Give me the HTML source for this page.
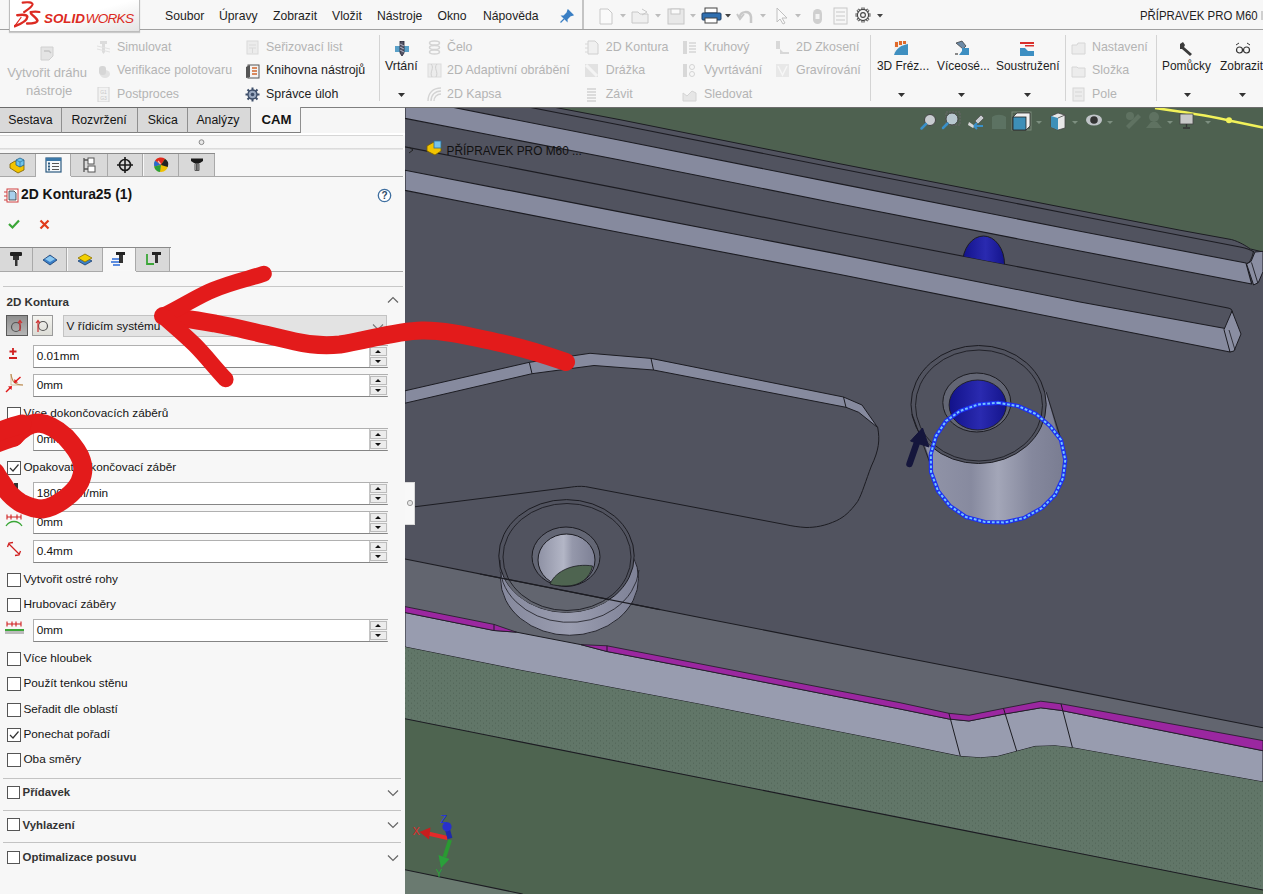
<!DOCTYPE html>
<html><head><meta charset="utf-8">
<style>
*{margin:0;padding:0;box-sizing:border-box}
html,body{width:1263px;height:894px;overflow:hidden;background:#f7f7f7;font-family:"Liberation Sans",sans-serif;color:#222}
.abs{position:absolute}
#menubar{position:absolute;left:0;top:0;width:1263px;height:30px;background:#f3f3f3;border-bottom:1px solid #a9a9a9}
#toolbar{position:absolute;left:0;top:30px;width:1263px;height:78px;background:#f7f7f7;border-bottom:2px solid #7b7b7b}
#panel{position:absolute;left:0;top:108px;width:405px;height:786px;background:#f5f5f5}
#vp{position:absolute;left:0;top:0}
.t{position:absolute;white-space:nowrap;font-size:12px;line-height:14px}
</style></head><body>
<div class="abs" style="left:0px;top:0px;width:1263px;height:29px;background:#f7f7f7"></div>
<div class="abs" style="left:0px;top:29px;width:1263px;height:1px;background:#a0a0a0"></div>
<div class="t" style="left:165px;top:10.1px;font-size:12.2px;line-height:12.2px;color:#1e1e1e;font-weight:400;">Soubor</div>
<div class="t" style="left:219px;top:10.1px;font-size:12.2px;line-height:12.2px;color:#1e1e1e;font-weight:400;">Úpravy</div>
<div class="t" style="left:273px;top:10.1px;font-size:12.2px;line-height:12.2px;color:#1e1e1e;font-weight:400;">Zobrazit</div>
<div class="t" style="left:332px;top:10.1px;font-size:12.2px;line-height:12.2px;color:#1e1e1e;font-weight:400;">Vložit</div>
<div class="t" style="left:377px;top:10.1px;font-size:12.2px;line-height:12.2px;color:#1e1e1e;font-weight:400;">Nástroje</div>
<div class="t" style="left:437.5px;top:10.1px;font-size:12.2px;line-height:12.2px;color:#1e1e1e;font-weight:400;">Okno</div>
<div class="t" style="left:483px;top:10.1px;font-size:12.2px;line-height:12.2px;color:#1e1e1e;font-weight:400;">Nápověda</div>
<svg class="abs" style="left:559px;top:8px" width="16" height="16" viewBox="0 0 16 16"><path d="M9,2 L14,7 L11,8 L8,11 L8,13 L3,8 L5,8 L8,5 Z M5,11 L1.5,14.5" fill="#3a7fc4" stroke="#3a7fc4" stroke-width="1.2"/></svg>
<div class="abs" style="left:582px;top:0px;width:2px;height:29px;background:#c4c4c4"></div>
<svg class="abs" style="left:598px;top:8px" width="16" height="17" viewBox="0 0 16 17"><path d="M2,1 H10 L14,5 V16 H2 Z" fill="#fafafa" stroke="#c8c8c8"/></svg>
<svg class="abs" style="left:631px;top:8px" width="22" height="17" viewBox="0 0 22 17"><path d="M1,4 H7 L9,6 H17 V15 H1 Z" fill="#efefef" stroke="#c8c8c8"/><path d="M11,1 L16,4 L11,7" fill="none" stroke="#c8c8c8"/></svg>
<svg class="abs" style="left:667px;top:8px" width="18" height="17" viewBox="0 0 18 17"><rect x="1" y="1" width="16" height="15" fill="#e8e8e8" stroke="#c6c6c6"/><rect x="4" y="1" width="9" height="5" fill="#fafafa" stroke="#c6c6c6"/></svg>
<svg class="abs" style="left:701px;top:7px" width="21" height="18" viewBox="0 0 21 18"><rect x="4" y="1" width="12" height="5" fill="#fff" stroke="#444"/><rect x="1" y="6" width="19" height="7" rx="1" fill="#2f6fb0" stroke="#1d3f66"/><rect x="4" y="11" width="12" height="5" fill="#fff" stroke="#444"/></svg>
<svg class="abs" style="left:736px;top:8px" width="18" height="17" viewBox="0 0 18 17"><path d="M4,9 C4,3 14,2 15,9 L15,15" fill="none" stroke="#c8c8c8" stroke-width="2.5"/><path d="M1,6 L4,11 L8,6" fill="none" stroke="#c8c8c8" stroke-width="2"/></svg>
<svg class="abs" style="left:775px;top:7px" width="14" height="18" viewBox="0 0 14 18"><path d="M2,1 L2,15 L5,12 L8,17 L10,16 L7,11 L12,11 Z" fill="#fafafa" stroke="#c0c0c0"/></svg>
<svg class="abs" style="left:812px;top:8px" width="11" height="17" viewBox="0 0 11 17"><rect x="1" y="1" width="9" height="15" rx="4.5" fill="#cfcfcf"/><rect x="3.5" y="6" width="4" height="5" fill="#f3f3f3"/></svg>
<svg class="abs" style="left:833px;top:7px" width="15" height="18" viewBox="0 0 15 18"><rect x="1" y="1" width="13" height="16" fill="#f6f6f6" stroke="#c8c8c8"/><path d="M3,5 H12 M3,9 H12 M3,13 H12" stroke="#c8c8c8"/></svg>
<svg class="abs" style="left:854px;top:6px" width="18" height="18" viewBox="0 0 18 18"><path d="M14.20,9.00 L16.60,9.00 M12.68,12.68 L14.37,14.37 M9.00,14.20 L9.00,16.60 M5.32,12.68 L3.63,14.37 M3.80,9.00 L1.40,9.00 M5.32,5.32 L3.63,3.63 M9.00,3.80 L9.00,1.40 M12.68,5.32 L14.37,3.63" stroke="#444" stroke-width="3.2"/><path d="M14.20,9.00 L16.60,9.00 M12.68,12.68 L14.37,14.37 M9.00,14.20 L9.00,16.60 M5.32,12.68 L3.63,14.37 M3.80,9.00 L1.40,9.00 M5.32,5.32 L3.63,3.63 M9.00,3.80 L9.00,1.40 M12.68,5.32 L14.37,3.63" stroke="#f4f4f4" stroke-width="1.2"/><circle cx="9" cy="9" r="5.6" fill="#f4f4f4" stroke="#444" stroke-width="1.1"/><circle cx="9" cy="9" r="2.4" fill="none" stroke="#444" stroke-width="1.1"/></svg>
<svg class="abs" style="left:620px;top:14px" width="6" height="4" viewBox="0 0 6 4"><path d="M0,0 H6 L3,3.5 Z" fill="#bdbdbd"/></svg>
<svg class="abs" style="left:655px;top:14px" width="6" height="4" viewBox="0 0 6 4"><path d="M0,0 H6 L3,3.5 Z" fill="#bdbdbd"/></svg>
<svg class="abs" style="left:689.5px;top:14px" width="6" height="4" viewBox="0 0 6 4"><path d="M0,0 H6 L3,3.5 Z" fill="#bdbdbd"/></svg>
<svg class="abs" style="left:725px;top:14px" width="6" height="4" viewBox="0 0 6 4"><path d="M0,0 H6 L3,3.5 Z" fill="#444"/></svg>
<svg class="abs" style="left:760px;top:14px" width="6" height="4" viewBox="0 0 6 4"><path d="M0,0 H6 L3,3.5 Z" fill="#bdbdbd"/></svg>
<svg class="abs" style="left:795px;top:14px" width="6" height="4" viewBox="0 0 6 4"><path d="M0,0 H6 L3,3.5 Z" fill="#bdbdbd"/></svg>
<svg class="abs" style="left:877px;top:14px" width="6" height="4" viewBox="0 0 6 4"><path d="M0,0 H6 L3,3.5 Z" fill="#444"/></svg>
<div class="t" style="left:1140px;top:8.7px;font-size:13.2px;line-height:13.2px;color:#1e1e1e;font-weight:400;transform:scaleX(0.865);transform-origin:0 0">PŘÍPRAVEK PRO M60</div>
<div class="abs" style="left:1261px;top:11px;width:2px;height:9px;background:#d0d0d0"></div>
<div class="abs" style="left:0px;top:30px;width:1263px;height:77px;background:#f7f7f7"></div>
<div class="abs" style="left:0px;top:107px;width:251px;height:1px;background:#6c6c6c"></div>
<div class="abs" style="left:301px;top:107px;width:962px;height:1px;background:#6c6c6c"></div>
<div class="abs" style="left:9px;top:-1px;width:131px;height:33px;background:linear-gradient(165deg,#ffffff 50%,#e4e4e4);border:1px solid #bdbdbd;box-shadow:0 1px 1px rgba(0,0,0,0.18)"></div>
<svg class="abs" style="left:14px;top:1px" width="30" height="28" viewBox="0 0 30 28"><g fill="none" stroke="#dc2a22" stroke-linecap="round"><path d="M8.7,1.6 C13,1 19,1 18.5,3.5 C17.5,6.5 13,9 10.2,11" stroke-width="2.2"/><path d="M3.3,14.2 C8,13.6 13.5,13.4 13.3,16 C13,19.5 7,23 0.5,25.3" stroke-width="2.5"/><path d="M0.5,25.3 L7,16.5" stroke-width="1.2"/><path d="M16.6,11 C20,10.6 23,10.6 25.4,11" stroke-width="2.2"/><path d="M17,12.5 C19,15 23,17.5 23.5,19.6 C23.5,22.2 18,22.6 13.1,22.6" stroke-width="2.5"/></g></svg>
<div class="t" style="left:44px;top:11.8px;font-size:13.4px;line-height:13.4px;color:#dc2a22;font-weight:700;font-style:italic">SOLID</div>
<div class="t" style="left:85.5px;top:11.7px;font-size:13.6px;line-height:13.6px;color:#dc2a22;font-weight:400;font-style:italic;letter-spacing:-0.7px">WORKS</div>
<div class="abs" style="left:379px;top:35px;width:1px;height:66px;background:#d4d4d4"></div>
<div class="abs" style="left:870px;top:35px;width:1px;height:66px;background:#d4d4d4"></div>
<div class="abs" style="left:1065px;top:35px;width:1px;height:66px;background:#d4d4d4"></div>
<div class="abs" style="left:1156px;top:35px;width:1px;height:66px;background:#d4d4d4"></div>
<svg class="abs" style="left:40px;top:46px" width="14" height="15" viewBox="0 0 14 15"><path d="M1,1 H13 V10 L9,14 H1 Z" fill="#e4e4e4" stroke="#d0d0d0"/><path d="M4,5 H9 L11,7" fill="none" stroke="#c4c4c4" stroke-width="1.3"/></svg>
<div class="t" style="left:7.3px;top:66.0px;font-size:13px;line-height:13px;color:#b4b4b4;font-weight:400;">Vytvořit dráhu</div>
<div class="t" style="left:26px;top:84.0px;font-size:13px;line-height:13px;color:#b4b4b4;font-weight:400;">nástroje</div>
<svg class="abs" style="left:96px;top:40.4px" width="15" height="15" viewBox="0 0 15 15"><path d="M4,1 H11 V4 H9 V12 L7.5,14 L6,12 V4 H4 Z" fill="#dcdcdc"/><path d="M1,6 L14,9 M1,9 L14,12" stroke="#e2e2e2"/></svg>
<div class="t" style="left:117px;top:41.2px;font-size:12.4px;line-height:12.4px;color:#b4b4b4;font-weight:400;">Simulovat</div>
<svg class="abs" style="left:96px;top:63.5px" width="15" height="15" viewBox="0 0 15 15"><ellipse cx="9" cy="10" rx="5" ry="4" fill="#e2e2e2"/><rect x="3" y="2" width="7" height="9" rx="3" fill="#d6d6d6"/></svg>
<div class="t" style="left:117px;top:64.3px;font-size:12.4px;line-height:12.4px;color:#b4b4b4;font-weight:400;">Verifikace polotovaru</div>
<svg class="abs" style="left:96px;top:86.8px" width="15" height="15" viewBox="0 0 15 15"><rect x="2" y="0" width="11" height="15" fill="#f2f2f2" stroke="#d4d4d4"/><text x="7.5" y="7" font-size="5" text-anchor="middle" fill="#c8c8c8" font-family="Liberation Sans">G1</text><text x="7.5" y="13" font-size="5" text-anchor="middle" fill="#c8c8c8" font-family="Liberation Sans">G3</text></svg>
<div class="t" style="left:117px;top:87.6px;font-size:12.4px;line-height:12.4px;color:#b4b4b4;font-weight:400;">Postproces</div>
<svg class="abs" style="left:245px;top:40.4px" width="15" height="15" viewBox="0 0 15 15"><rect x="2" y="1" width="11" height="13" fill="#ececec" stroke="#dadada"/><path d="M4,5 H11 M4,8 H11 M7.5,8 V13" stroke="#dadada"/></svg>
<div class="t" style="left:266px;top:41.2px;font-size:12.4px;line-height:12.4px;color:#b4b4b4;font-weight:400;">Seřizovací list</div>
<svg class="abs" style="left:245px;top:63.5px" width="15" height="15" viewBox="0 0 15 15"><rect x="3" y="1" width="11" height="13" fill="#f4f4f4" stroke="#555"/><path d="M1,3 L5,1 L5,13 L1,14 Z" fill="#555"/><path d="M7,4 H12 M7,7 H12 M7,10 H12" stroke="#d0652b" stroke-width="1.4"/></svg>
<div class="t" style="left:266px;top:64.3px;font-size:12.4px;line-height:12.4px;color:#1e1e1e;font-weight:400;">Knihovna nástrojů</div>
<svg class="abs" style="left:245px;top:86.8px" width="15" height="15" viewBox="0 0 15 15"><circle cx="7.5" cy="7.5" r="4.5" fill="#9aa9c0" stroke="#3e4f6a" stroke-width="1.4"/><circle cx="7.5" cy="7.5" r="1.8" fill="#3e4f6a"/><path d="M7.5,0.5 V3 M7.5,12 V14.5 M0.5,7.5 H3 M12,7.5 H14.5 M2.5,2.5 L4.3,4.3 M10.7,10.7 L12.5,12.5 M2.5,12.5 L4.3,10.7 M10.7,4.3 L12.5,2.5" stroke="#3e4f6a" stroke-width="2"/></svg>
<div class="t" style="left:266px;top:87.6px;font-size:12.4px;line-height:12.4px;color:#1e1e1e;font-weight:400;">Správce úloh</div>
<svg class="abs" style="left:394px;top:41px" width="16" height="15" viewBox="0 0 16 15"><rect x="1" y="5" width="14" height="6" fill="#5aa0c8"/><path d="M6,0 H10 V12 L8,15 L6,12 Z" fill="#556" stroke="#223" stroke-width="0.8"/><path d="M6,3 L10,5 M6,6 L10,8 M6,9 L10,11" stroke="#ccd" stroke-width="0.8"/></svg>
<div class="t" style="left:385px;top:60.3px;font-size:12.4px;line-height:12.4px;color:#1e1e1e;font-weight:400;">Vrtání</div>
<svg class="abs" style="left:427px;top:40.4px" width="15" height="15" viewBox="0 0 15 15"><ellipse cx="7.5" cy="3" rx="5" ry="2" fill="none" stroke="#d4d4d4" stroke-width="1.5"/><ellipse cx="7.5" cy="7.5" rx="5" ry="2" fill="none" stroke="#d4d4d4" stroke-width="1.5"/><ellipse cx="7.5" cy="12" rx="5" ry="2" fill="none" stroke="#d4d4d4" stroke-width="1.5"/></svg>
<div class="t" style="left:447px;top:41.2px;font-size:12.4px;line-height:12.4px;color:#b4b4b4;font-weight:400;">Čelo</div>
<svg class="abs" style="left:427px;top:63.3px" width="15" height="15" viewBox="0 0 15 15"><rect x="1" y="1" width="13" height="13" fill="#ececec" stroke="#dcdcdc"/><path d="M4,1 C8,5 2,9 5,14 M10,1 C6,5 12,9 9,14" fill="none" stroke="#d0d0d0"/></svg>
<div class="t" style="left:447px;top:64.1px;font-size:12.4px;line-height:12.4px;color:#b4b4b4;font-weight:400;">2D Adaptivní obrábění</div>
<svg class="abs" style="left:427px;top:87px" width="15" height="15" viewBox="0 0 15 15"><path d="M1,14 C1,6 6,1 14,1 M4,14 C4,8 8,4 14,4 M7,14 C7,10 10,7 14,7" fill="none" stroke="#d4d4d4" stroke-width="1.4"/></svg>
<div class="t" style="left:447px;top:87.8px;font-size:12.4px;line-height:12.4px;color:#b4b4b4;font-weight:400;">2D Kapsa</div>
<svg class="abs" style="left:584px;top:40.4px" width="15" height="15" viewBox="0 0 15 15"><path d="M4,1 H11 L14,4 V14 H4 Z" fill="#f0f0f0" stroke="#d0d0d0"/><path d="M1,4 H4 M1,8 H4 M1,12 H4" stroke="#d8d8d8"/></svg>
<div class="t" style="left:605.8px;top:41.2px;font-size:12.4px;line-height:12.4px;color:#b4b4b4;font-weight:400;">2D Kontura</div>
<svg class="abs" style="left:584px;top:63.3px" width="15" height="15" viewBox="0 0 15 15"><rect x="1" y="1" width="13" height="13" fill="#e2e2e2"/><path d="M2,2 L13,13" stroke="#f4f4f4" stroke-width="3"/></svg>
<div class="t" style="left:605.8px;top:64.1px;font-size:12.4px;line-height:12.4px;color:#b4b4b4;font-weight:400;">Drážka</div>
<svg class="abs" style="left:584px;top:87px" width="15" height="15" viewBox="0 0 15 15"><path d="M3,2 H12 M3,5 H12 M3,8 H12 M3,11 H12 M3,14 H12" stroke="#d2d2d2" stroke-width="1.5"/></svg>
<div class="t" style="left:605.8px;top:87.8px;font-size:12.4px;line-height:12.4px;color:#b4b4b4;font-weight:400;">Závit</div>
<svg class="abs" style="left:682px;top:40.4px" width="15" height="15" viewBox="0 0 15 15"><rect x="1" y="1" width="4" height="13" fill="#d8d8d8"/><path d="M7,3 H14 M7,6 H14 M7,9 H14 M7,12 H14" stroke="#d6d6d6" stroke-width="1.3"/></svg>
<div class="t" style="left:704px;top:41.2px;font-size:12.4px;line-height:12.4px;color:#b4b4b4;font-weight:400;">Kruhový</div>
<svg class="abs" style="left:682px;top:63.3px" width="15" height="15" viewBox="0 0 15 15"><rect x="1" y="1" width="4" height="13" fill="#d8d8d8"/><circle cx="10" cy="4" r="2.5" fill="none" stroke="#d4d4d4"/><circle cx="10" cy="11" r="2.5" fill="none" stroke="#d4d4d4"/></svg>
<div class="t" style="left:704px;top:64.1px;font-size:12.4px;line-height:12.4px;color:#b4b4b4;font-weight:400;">Vyvrtávání</div>
<svg class="abs" style="left:682px;top:87px" width="15" height="15" viewBox="0 0 15 15"><path d="M1,6 L5,9 L10,4 L14,6 V14 H1 Z" fill="#e6e6e6" stroke="#d4d4d4"/></svg>
<div class="t" style="left:704px;top:87.8px;font-size:12.4px;line-height:12.4px;color:#b4b4b4;font-weight:400;">Sledovat</div>
<svg class="abs" style="left:775px;top:40.4px" width="15" height="15" viewBox="0 0 15 15"><rect x="1" y="1" width="4" height="8" fill="#d8d8d8"/><path d="M5,9 L8,12 H14 V14 H5 Z" fill="#d8d8d8"/></svg>
<div class="t" style="left:796px;top:41.2px;font-size:12.4px;line-height:12.4px;color:#b4b4b4;font-weight:400;">2D Zkosení</div>
<svg class="abs" style="left:775px;top:63.3px" width="15" height="15" viewBox="0 0 15 15"><rect x="1" y="1" width="13" height="13" fill="#e8e8e8"/><path d="M3,3 L7.5,12 L12,3" fill="none" stroke="#f6f6f6" stroke-width="1.5"/></svg>
<div class="t" style="left:796px;top:64.1px;font-size:12.4px;line-height:12.4px;color:#b4b4b4;font-weight:400;">Gravírování</div>
<svg class="abs" style="left:893px;top:40px" width="16" height="16" viewBox="0 0 16 16"><path d="M1,15 V1 H15 V15 Z" fill="#f0f0f0"/><path d="M1,15 C3,8 9,5 15,4 V15 Z" fill="#3f8fc0"/><path d="M2,2 H5 V7 H2 Z M6,1 H9 V5 H6 Z M10,1 H13 V4 H10 Z" fill="#e06a2a"/></svg>
<div class="t" style="left:877px;top:61.0px;font-size:11.9px;line-height:11.9px;color:#1e1e1e;font-weight:400;">3D Fréz...</div>
<svg class="abs" style="left:954px;top:40px" width="16" height="16" viewBox="0 0 16 16"><path d="M2,3 L8,1 L12,6 L9,9 Z" fill="#6d8aa6" stroke="#333" stroke-width="0.7"/><path d="M8,8 H15 V15 H5 L8,11 Z" fill="#3d8fc2"/><path d="M1,13 H4 V15 H1 Z" fill="#888"/></svg>
<div class="t" style="left:937px;top:61.0px;font-size:11.9px;line-height:11.9px;color:#1e1e1e;font-weight:400;">Víceosé...</div>
<svg class="abs" style="left:1019px;top:40px" width="16" height="16" viewBox="0 0 16 16"><path d="M1,2 H15 V4 H1 Z M6,5 H15 V6.5 H6 Z" fill="#d9302c"/><path d="M1,8 H6 L9,11 H15 V16 H1 Z" fill="#3d8fc2"/></svg>
<div class="t" style="left:996px;top:61.0px;font-size:11.9px;line-height:11.9px;color:#1e1e1e;font-weight:400;">Soustružení</div>
<svg class="abs" style="left:1071px;top:40.4px" width="15" height="15" viewBox="0 0 15 15"><path d="M1,5 H6 L7,3 H14 V14 H1 Z" fill="#ececec" stroke="#d6d6d6"/></svg>
<div class="t" style="left:1092px;top:41.2px;font-size:12.4px;line-height:12.4px;color:#b4b4b4;font-weight:400;">Nastavení</div>
<svg class="abs" style="left:1071px;top:63.3px" width="15" height="15" viewBox="0 0 15 15"><path d="M1,4 H6 L7,5 H14 V14 H1 Z" fill="#ececec" stroke="#d6d6d6"/></svg>
<div class="t" style="left:1092px;top:64.1px;font-size:12.4px;line-height:12.4px;color:#b4b4b4;font-weight:400;">Složka</div>
<svg class="abs" style="left:1071px;top:86.8px" width="15" height="15" viewBox="0 0 15 15"><rect x="2" y="1" width="11" height="13" fill="#ececec" stroke="#d6d6d6"/><path d="M4,5 H11 M4,9 H11" stroke="#d6d6d6"/></svg>
<div class="t" style="left:1092px;top:87.6px;font-size:12.4px;line-height:12.4px;color:#b4b4b4;font-weight:400;">Pole</div>
<svg class="abs" style="left:1178px;top:41px" width="16" height="15" viewBox="0 0 16 15"><path d="M2,3 L5,1 L7,4 L6,6 L14,13 L12,15 L4,8 L2,8 Z" fill="#3b3b3b"/></svg>
<div class="t" style="left:1162px;top:61.0px;font-size:11.9px;line-height:11.9px;color:#1e1e1e;font-weight:400;">Pomůcky</div>
<svg class="abs" style="left:1235px;top:41px" width="16" height="15" viewBox="0 0 16 15"><circle cx="4.5" cy="9" r="3" fill="none" stroke="#333" stroke-width="1.2"/><circle cx="11.5" cy="9" r="3" fill="none" stroke="#333" stroke-width="1.2"/><path d="M1,4 L4,2 M15,4 L12,2" stroke="#333"/></svg>
<div class="t" style="left:1220px;top:61.0px;font-size:11.9px;line-height:11.9px;color:#1e1e1e;font-weight:400;">Zobrazit</div>
<svg class="abs" style="left:397.7px;top:93px" width="7" height="5" viewBox="0 0 7 5"><path d="M0,0 H7 L3.5,4 Z" fill="#333"/></svg>
<svg class="abs" style="left:898px;top:93px" width="7" height="5" viewBox="0 0 7 5"><path d="M0,0 H7 L3.5,4 Z" fill="#333"/></svg>
<svg class="abs" style="left:958px;top:93px" width="7" height="5" viewBox="0 0 7 5"><path d="M0,0 H7 L3.5,4 Z" fill="#333"/></svg>
<svg class="abs" style="left:1024px;top:93px" width="7" height="5" viewBox="0 0 7 5"><path d="M0,0 H7 L3.5,4 Z" fill="#333"/></svg>
<svg class="abs" style="left:1183.6px;top:93px" width="7" height="5" viewBox="0 0 7 5"><path d="M0,0 H7 L3.5,4 Z" fill="#333"/></svg>
<svg class="abs" style="left:1239px;top:93px" width="7" height="5" viewBox="0 0 7 5"><path d="M0,0 H7 L3.5,4 Z" fill="#333"/></svg>
<div class="abs" style="left:0px;top:108px;width:405px;height:786px;background:#f7f7f7"></div>
<div class="abs" style="left:301.3px;top:107px;width:104px;height:26px;background:#f6f6f6;border-top:1px solid #7f7f7f"></div>
<div class="abs" style="left:0px;top:108px;width:61.5px;height:25px;background:#d9d9d9;border-right:1px solid #8f8f8f;border-bottom:1px solid #7f7f7f"></div>
<div class="t" style="left:8.2px;top:113.8px;font-size:12.3px;line-height:12.3px;color:#141414;font-weight:400;">Sestava</div>
<div class="abs" style="left:61.5px;top:108px;width:76.0px;height:25px;background:#d9d9d9;border-right:1px solid #8f8f8f;border-bottom:1px solid #7f7f7f"></div>
<div class="t" style="left:71.4px;top:113.8px;font-size:12.3px;line-height:12.3px;color:#141414;font-weight:400;">Rozvržení</div>
<div class="abs" style="left:137.5px;top:108px;width:50.19999999999999px;height:25px;background:#d9d9d9;border-right:1px solid #8f8f8f;border-bottom:1px solid #7f7f7f"></div>
<div class="t" style="left:147.7px;top:113.8px;font-size:12.3px;line-height:12.3px;color:#141414;font-weight:400;">Skica</div>
<div class="abs" style="left:187.7px;top:108px;width:62.900000000000006px;height:25px;background:#d9d9d9;border-right:1px solid #8f8f8f;border-bottom:1px solid #7f7f7f"></div>
<div class="t" style="left:196.4px;top:113.8px;font-size:12.3px;line-height:12.3px;color:#141414;font-weight:400;">Analýzy</div>
<div class="abs" style="left:250.6px;top:107px;width:50.7px;height:26px;background:#f6f6f6;border-right:1px solid #8f8f8f;border-bottom:1px solid #7f7f7f"></div>
<div class="t" style="left:261.4px;top:113.4px;font-size:13.2px;line-height:13.2px;color:#141414;font-weight:700;">CAM</div>
<div class="abs" style="left:0px;top:133px;width:405px;height:2px;background:#ffffff"></div>
<div class="abs" style="left:0px;top:135px;width:403px;height:1px;background:#d6d6d6"></div>
<svg class="abs" style="left:197px;top:138px" width="8" height="8" viewBox="0 0 8 8"><circle cx="4.5" cy="4.2" r="2.4" fill="#e8e8e8" stroke="#8a8a8a" stroke-width="1"/></svg>
<div class="abs" style="left:0px;top:148px;width:403px;height:2px;background:linear-gradient(#d6d6d6,#ededed)"></div>
<div class="abs" style="left:0px;top:153px;width:215px;height:1px;background:#8a8a8a"></div>
<div class="abs" style="left:0px;top:154px;width:35.7px;height:22px;background:#d9d9d9;border-right:1px solid #a9a9a9"></div>
<div class="abs" style="left:35.7px;top:154px;width:35.7px;height:22px;background:#f8f8f8;border-right:1px solid #a9a9a9"></div>
<div class="abs" style="left:71.4px;top:154px;width:36.39999999999999px;height:22px;background:#d9d9d9;border-right:1px solid #a9a9a9"></div>
<div class="abs" style="left:107.8px;top:154px;width:35.7px;height:22px;background:#d9d9d9;border-right:1px solid #a9a9a9"></div>
<div class="abs" style="left:143.5px;top:154px;width:35.69999999999999px;height:22px;background:#d9d9d9;border-right:1px solid #a9a9a9"></div>
<div class="abs" style="left:179.2px;top:154px;width:35.80000000000001px;height:22px;background:#d9d9d9;border-right:1px solid #a9a9a9"></div>
<div class="abs" style="left:0px;top:176px;width:35.7px;height:1px;background:#a9a9a9"></div>
<div class="abs" style="left:71.4px;top:176px;width:331.6px;height:1px;background:#a9a9a9"></div>
<svg class="abs" style="left:8px;top:156px" width="18" height="18" viewBox="0 0 18 18"><path d="M2,8 L7,5 L16,9 L16,14 L10,17 L2,12 Z" fill="#f2c400" stroke="#7a5d00" stroke-width="0.8"/><path d="M8,4 L12,2 L16,4 L16,9 L12,11 L8,9 Z" fill="#70c4ec" stroke="#1e5f8a" stroke-width="0.8"/><path d="M8,4 L12,6 L16,4 M12,6 V11" fill="none" stroke="#1e5f8a" stroke-width="0.6"/></svg>
<svg class="abs" style="left:44px;top:156px" width="18" height="18" viewBox="0 0 18 18"><rect x="2" y="2" width="15" height="14" fill="#f4f8fb" stroke="#2c5a80" stroke-width="1.2"/><rect x="2" y="2" width="15" height="3" fill="#3c78a8"/><path d="M4,7.5 H6 M4,10.5 H6 M4,13.5 H6" stroke="#2c5a80" stroke-width="1.8"/><path d="M8,7.5 H15 M8,10.5 H15 M8,13.5 H15" stroke="#555" stroke-width="1"/></svg>
<svg class="abs" style="left:80px;top:156px" width="18" height="18" viewBox="0 0 18 18"><path d="M4,2 V16 M4,4 H8 M4,13 H8" stroke="#555" stroke-width="1.3" fill="none"/><rect x="8" y="2" width="6" height="6" fill="#fff" stroke="#555"/><rect x="8" y="10" width="7" height="6" fill="#fff" stroke="#555"/></svg>
<svg class="abs" style="left:116px;top:156px" width="18" height="18" viewBox="0 0 18 18"><circle cx="9" cy="9" r="5.5" fill="none" stroke="#1a1a1a" stroke-width="1.6"/><path d="M9,1 V17 M1,9 H17" stroke="#1a1a1a" stroke-width="1.6"/></svg>
<svg class="abs" style="left:152px;top:156px" width="18" height="18" viewBox="0 0 18 18"><circle cx="9" cy="9" r="7" fill="#f0c000"/><path d="M9,9 L3,4.5 A7,7 0 0 1 13,2.8 Z" fill="#e0281c"/><path d="M9,9 L13,2.8 A7,7 0 0 1 15.8,11 Z" fill="#222"/><path d="M9,9 L2.2,10.5 A7,7 0 0 1 3,4.5 Z" fill="#2a6ad0"/><path d="M9,9 L8,16 A7,7 0 0 1 2.2,10.5 Z" fill="#2aa03a"/><path d="M6,5 L8.5,8" stroke="#fff" stroke-width="1.2" opacity="0.7"/></svg>
<svg class="abs" style="left:188px;top:156px" width="18" height="18" viewBox="0 0 18 18"><path d="M3,2.5 H15 V5 L12,7 H6 L3,5 Z" fill="#1a1a1a"/><rect x="6.5" y="7" width="5" height="8" rx="1" fill="#555"/><path d="M7.5,8 V14 M10,8 V14" stroke="#aaa" stroke-width="0.8"/></svg>
<svg class="abs" style="left:4px;top:187px" width="16" height="16" viewBox="0 0 16 16"><rect x="3" y="2" width="11" height="13" fill="#fff" stroke="#d04040" stroke-width="1"/><path d="M5,4 H10 L12,6 V13 H5 Z" fill="#a8d0ec" stroke="#333" stroke-width="0.8"/><path d="M0,5 H3 M0,9 H3 M0,13 H3" stroke="#d04040"/></svg>
<div class="t" style="left:21px;top:188.1px;font-size:13.9px;line-height:13.9px;color:#141414;font-weight:700;">2D Kontura25 (1)</div>
<svg class="abs" style="left:377px;top:188px" width="15" height="15" viewBox="0 0 15 15"><circle cx="7.5" cy="7.5" r="6.2" fill="#fff" stroke="#3f6fa0" stroke-width="1.3"/><text x="7.5" y="11.3" font-size="10" font-weight="700" text-anchor="middle" fill="#2e4a66" font-family="Liberation Sans">?</text></svg>
<svg class="abs" style="left:7px;top:218px" width="14" height="12" viewBox="0 0 14 12"><path d="M2,6 L5.5,9.5 L12,2.5" fill="none" stroke="#3aa637" stroke-width="2.2"/></svg>
<svg class="abs" style="left:38px;top:218px" width="13" height="13" viewBox="0 0 13 13"><path d="M2.5,2.5 L10.5,10.5 M10.5,2.5 L2.5,10.5" stroke="#e03a1a" stroke-width="2.2"/></svg>
<div class="abs" style="left:0px;top:247px;width:171px;height:1px;background:#8a8a8a"></div>
<div class="abs" style="left:0px;top:248px;width:33.4px;height:23px;background:#d9d9d9;border-right:1px solid #a9a9a9"></div>
<div class="abs" style="left:33.4px;top:248px;width:34.1px;height:23px;background:#d9d9d9;border-right:1px solid #a9a9a9"></div>
<div class="abs" style="left:67.5px;top:248px;width:35.099999999999994px;height:23px;background:#d9d9d9;border-right:1px solid #a9a9a9"></div>
<div class="abs" style="left:102.6px;top:248px;width:33.80000000000001px;height:23px;background:#f8f8f8;border-right:1px solid #a9a9a9"></div>
<div class="abs" style="left:136.4px;top:248px;width:34.099999999999994px;height:23px;background:#d9d9d9;border-right:1px solid #a9a9a9"></div>
<div class="abs" style="left:0px;top:271px;width:102.6px;height:1px;background:#a9a9a9"></div>
<div class="abs" style="left:136.4px;top:271px;width:266.6px;height:1px;background:#a9a9a9"></div>
<svg class="abs" style="left:7px;top:250px" width="18" height="18" viewBox="0 0 18 18"><rect x="3" y="2" width="12" height="4" rx="1" fill="#222"/><rect x="6" y="6" width="6" height="4" fill="#333"/><rect x="8" y="10" width="2.5" height="6" fill="#333"/></svg>
<svg class="abs" style="left:41px;top:250px" width="18" height="18" viewBox="0 0 18 18"><path d="M2,10 L9,5 L16,10 L9,15 Z" fill="#3a7fc8" stroke="#1a3f70" stroke-width="0.8"/><path d="M4,9 L9,6 L14,9 L9,12 Z" fill="#8cc8f0"/></svg>
<svg class="abs" style="left:76px;top:250px" width="18" height="18" viewBox="0 0 18 18"><path d="M2,11 L9,7 L16,11 L9,15 Z" fill="#3a7fc8" stroke="#1a3f70" stroke-width="0.8"/><path d="M2,8 L9,4 L16,8 L9,12 Z" fill="#f2d000" stroke="#8a7000" stroke-width="0.8"/></svg>
<svg class="abs" style="left:110px;top:250px" width="18" height="18" viewBox="0 0 18 18"><rect x="6" y="2" width="9" height="3" fill="#222"/><rect x="9" y="5" width="4" height="8" fill="#333"/><path d="M2,9 H9 M1,12 H9 M3,15 H10" stroke="#2a6ad8" stroke-width="1.5"/></svg>
<svg class="abs" style="left:144px;top:250px" width="18" height="18" viewBox="0 0 18 18"><rect x="8" y="2" width="9" height="3" fill="#222"/><rect x="11" y="5" width="3" height="8" fill="#333"/><path d="M3,4 V14 H10" fill="none" stroke="#3aa637" stroke-width="1.8"/></svg>
<div class="abs" style="left:3px;top:286px;width:400px;height:1px;background:#c8c8c8"></div>
<div class="t" style="left:6.5px;top:296.2px;font-size:11.6px;line-height:11.6px;color:#333;font-weight:700;">2D Kontura</div>
<svg class="abs" style="left:387px;top:296px" width="12" height="8" viewBox="0 0 12 8"><path d="M1,6.5 L6,1.5 L11,6.5" fill="none" stroke="#666" stroke-width="1.2"/></svg>
<div class="abs" style="left:6px;top:315px;width:22px;height:21px;background:linear-gradient(#8f8f8f,#b5b5b5);border:1px solid #5a5a5a"></div>
<svg class="abs" style="left:7px;top:317px" width="20" height="18" viewBox="0 0 20 18"><circle cx="9" cy="10" r="4.5" fill="none" stroke="#555" stroke-width="1.2"/><path d="M13,14 V4 M11,6 L13,3.5 L15,6" fill="none" stroke="#d03030" stroke-width="1.2"/></svg>
<div class="abs" style="left:31.5px;top:315px;width:21px;height:21px;background:linear-gradient(#f4f4f0,#dcdcd6);border:1px solid #9a9a9a"></div>
<svg class="abs" style="left:32px;top:317px" width="20" height="18" viewBox="0 0 20 18"><circle cx="11" cy="9" r="4.5" fill="none" stroke="#555" stroke-width="1.2"/><path d="M6,15 V4 M4,6 L6,3.5 L8,6" fill="none" stroke="#d03030" stroke-width="1.2"/></svg>
<div class="abs" style="left:63px;top:315px;width:324px;height:22px;background:#e3e3e3;border:1px solid #c3c3c3"></div>
<div class="t" style="left:66.6px;top:321.1px;font-size:11.8px;line-height:11.8px;color:#141414;font-weight:400;">V řídicím systému</div>
<svg class="abs" style="left:372px;top:323px" width="12" height="8" viewBox="0 0 12 8"><path d="M1,1.5 L6,6.5 L11,1.5" fill="none" stroke="#777" stroke-width="1.1"/></svg>
<div class="abs" style="left:32.5px;top:344.5px;width:355px;height:23px;background:#fff;border:1px solid #b0b0b0;border-bottom:1px solid #858585"></div>
<div class="abs" style="left:368.5px;top:345.5px;width:19px;height:21px;background:#f3f3f3;border-left:1px solid #c4c4c4"></div>
<div class="abs" style="left:369.5px;top:346.5px;width:17px;height:9.0px;background:#ececec;border:1px solid #bcbcbc"></div>
<div class="abs" style="left:369.5px;top:356.5px;width:17px;height:9.0px;background:#ececec;border:1px solid #bcbcbc"></div>
<svg class="abs" style="left:372px;top:346.5px" width="12" height="19" viewBox="0 0 12 19"><path d="M3,6.1 L6,3.1 L9,6.1 Z M3,13.1 L6,16.1 L9,13.1 Z" fill="#111"/></svg>
<div class="t" style="left:36.7px;top:350.5px;font-size:11.8px;line-height:11.8px;color:#141414;font-weight:400;">0.01mm</div>
<svg class="abs" style="left:6px;top:347px" width="14" height="14" viewBox="0 0 14 14"><path d="M7,1 V8 M3.5,4.5 H10.5 M3,11 H11" stroke="#d02020" stroke-width="1.8"/></svg>
<div class="abs" style="left:32.5px;top:373.5px;width:355px;height:23px;background:#fff;border:1px solid #b0b0b0;border-bottom:1px solid #858585"></div>
<div class="abs" style="left:368.5px;top:374.5px;width:19px;height:21px;background:#f3f3f3;border-left:1px solid #c4c4c4"></div>
<div class="abs" style="left:369.5px;top:375.5px;width:17px;height:9.0px;background:#ececec;border:1px solid #bcbcbc"></div>
<div class="abs" style="left:369.5px;top:385.5px;width:17px;height:9.0px;background:#ececec;border:1px solid #bcbcbc"></div>
<svg class="abs" style="left:372px;top:375.5px" width="12" height="19" viewBox="0 0 12 19"><path d="M3,6.1 L6,3.1 L9,6.1 Z M3,13.1 L6,16.1 L9,13.1 Z" fill="#111"/></svg>
<div class="t" style="left:36.7px;top:379.5px;font-size:11.8px;line-height:11.8px;color:#141414;font-weight:400;">0mm</div>
<svg class="abs" style="left:4px;top:372px" width="22" height="22" viewBox="0 0 22 22"><path d="M7,2 C8,9 10,13 19,13" fill="none" stroke="#b8864a" stroke-width="1.2"/><path d="M7,13 H19 M7,2 V13" fill="none" stroke="#c8a070" stroke-width="0.7"/><path d="M16.5,5 L11,10" stroke="#e01818" stroke-width="1.4"/><path d="M10,11 L10.5,7 L14,10.5 Z" fill="#e01818"/><path d="M2,20 L6.5,15.5" stroke="#e01818" stroke-width="1.4"/><path d="M8,14 L7.5,18 L4,14.5 Z" fill="#e01818"/></svg>
<div class="abs" style="left:6.5px;top:406.5px;width:14px;height:14px;background:#fff;border:1px solid #555"></div>
<div class="t" style="left:23.4px;top:407.6px;font-size:11.8px;line-height:11.8px;color:#141414;font-weight:400;">Více dokončovacích záběrů</div>
<div class="abs" style="left:32.5px;top:428.2px;width:355px;height:23px;background:#fff;border:1px solid #b0b0b0;border-bottom:1px solid #858585"></div>
<div class="abs" style="left:368.5px;top:429.2px;width:19px;height:21px;background:#f3f3f3;border-left:1px solid #c4c4c4"></div>
<div class="abs" style="left:369.5px;top:430.2px;width:17px;height:9.0px;background:#ececec;border:1px solid #bcbcbc"></div>
<div class="abs" style="left:369.5px;top:440.2px;width:17px;height:9.0px;background:#ececec;border:1px solid #bcbcbc"></div>
<svg class="abs" style="left:372px;top:430.2px" width="12" height="19" viewBox="0 0 12 19"><path d="M3,6.1 L6,3.1 L9,6.1 Z M3,13.1 L6,16.1 L9,13.1 Z" fill="#111"/></svg>
<div class="t" style="left:36.7px;top:434.2px;font-size:11.8px;line-height:11.8px;color:#141414;font-weight:400;">0mm</div>
<div class="abs" style="left:6.5px;top:461.3px;width:14px;height:14px;background:#fff;border:1px solid #555"></div>
<svg class="abs" style="left:7.5px;top:462.3px" width="12" height="12" viewBox="0 0 12 12"><path d="M2,6 L5,9 L10.5,2.5" fill="none" stroke="#333" stroke-width="1.2"/></svg>
<div class="t" style="left:23.4px;top:462.4px;font-size:11.8px;line-height:11.8px;color:#141414;font-weight:400;">Opakovat dokončovací záběr</div>
<div class="abs" style="left:32.5px;top:481.8px;width:355px;height:23px;background:#fff;border:1px solid #b0b0b0;border-bottom:1px solid #858585"></div>
<div class="abs" style="left:368.5px;top:482.8px;width:19px;height:21px;background:#f3f3f3;border-left:1px solid #c4c4c4"></div>
<div class="abs" style="left:369.5px;top:483.8px;width:17px;height:9.0px;background:#ececec;border:1px solid #bcbcbc"></div>
<div class="abs" style="left:369.5px;top:493.8px;width:17px;height:9.0px;background:#ececec;border:1px solid #bcbcbc"></div>
<svg class="abs" style="left:372px;top:483.8px" width="12" height="19" viewBox="0 0 12 19"><path d="M3,6.1 L6,3.1 L9,6.1 Z M3,13.1 L6,16.1 L9,13.1 Z" fill="#111"/></svg>
<div class="t" style="left:36.7px;top:487.8px;font-size:11.8px;line-height:11.8px;color:#141414;font-weight:400;">1800 mm/min</div>
<svg class="abs" style="left:10px;top:482px" width="10" height="14" viewBox="0 0 10 14"><rect x="4" y="1" width="4" height="11" fill="#333"/><rect x="1" y="10" width="8" height="3" fill="#333"/></svg>
<div class="abs" style="left:32.5px;top:510.7px;width:355px;height:23px;background:#fff;border:1px solid #b0b0b0;border-bottom:1px solid #858585"></div>
<div class="abs" style="left:368.5px;top:511.7px;width:19px;height:21px;background:#f3f3f3;border-left:1px solid #c4c4c4"></div>
<div class="abs" style="left:369.5px;top:512.7px;width:17px;height:9.0px;background:#ececec;border:1px solid #bcbcbc"></div>
<div class="abs" style="left:369.5px;top:522.7px;width:17px;height:9.0px;background:#ececec;border:1px solid #bcbcbc"></div>
<svg class="abs" style="left:372px;top:512.7px" width="12" height="19" viewBox="0 0 12 19"><path d="M3,6.1 L6,3.1 L9,6.1 Z M3,13.1 L6,16.1 L9,13.1 Z" fill="#111"/></svg>
<div class="t" style="left:36.7px;top:516.7px;font-size:11.8px;line-height:11.8px;color:#141414;font-weight:400;">0mm</div>
<svg class="abs" style="left:5px;top:513px" width="20" height="16" viewBox="0 0 20 16"><path d="M2,4 H16 M2,1.5 V6.5 M16,1.5 V6.5 M6,1.5 V6.5 M12,1.5 V6.5" stroke="#d02020" stroke-width="1.1"/><path d="M1,13 C5,7 13,7 17,13" fill="none" stroke="#3aa637" stroke-width="1.3"/></svg>
<div class="abs" style="left:32.5px;top:539.7px;width:355px;height:23px;background:#fff;border:1px solid #b0b0b0;border-bottom:1px solid #858585"></div>
<div class="abs" style="left:368.5px;top:540.7px;width:19px;height:21px;background:#f3f3f3;border-left:1px solid #c4c4c4"></div>
<div class="abs" style="left:369.5px;top:541.7px;width:17px;height:9.0px;background:#ececec;border:1px solid #bcbcbc"></div>
<div class="abs" style="left:369.5px;top:551.7px;width:17px;height:9.0px;background:#ececec;border:1px solid #bcbcbc"></div>
<svg class="abs" style="left:372px;top:541.7px" width="12" height="19" viewBox="0 0 12 19"><path d="M3,6.1 L6,3.1 L9,6.1 Z M3,13.1 L6,16.1 L9,13.1 Z" fill="#111"/></svg>
<div class="t" style="left:36.7px;top:545.7px;font-size:11.8px;line-height:11.8px;color:#141414;font-weight:400;">0.4mm</div>
<svg class="abs" style="left:6px;top:541px" width="16" height="16" viewBox="0 0 16 16"><path d="M3,3 L13,13" stroke="#d02020" stroke-width="1.3"/><path d="M1.5,6 L3,2 L7,1.5 M9,14.5 L13,14 L14.5,10" fill="none" stroke="#d02020" stroke-width="1.3"/></svg>
<div class="abs" style="left:6.5px;top:572.7px;width:14px;height:14px;background:#fff;border:1px solid #555"></div>
<div class="t" style="left:23.4px;top:573.8px;font-size:11.8px;line-height:11.8px;color:#141414;font-weight:400;">Vytvořit ostré rohy</div>
<div class="abs" style="left:6.5px;top:598px;width:14px;height:14px;background:#fff;border:1px solid #555"></div>
<div class="t" style="left:23.4px;top:599.1px;font-size:11.8px;line-height:11.8px;color:#141414;font-weight:400;">Hrubovací záběry</div>
<div class="abs" style="left:32.5px;top:618.8px;width:355px;height:23px;background:#fff;border:1px solid #b0b0b0;border-bottom:1px solid #858585"></div>
<div class="abs" style="left:368.5px;top:619.8px;width:19px;height:21px;background:#f3f3f3;border-left:1px solid #c4c4c4"></div>
<div class="abs" style="left:369.5px;top:620.8px;width:17px;height:9.0px;background:#ececec;border:1px solid #bcbcbc"></div>
<div class="abs" style="left:369.5px;top:630.8px;width:17px;height:9.0px;background:#ececec;border:1px solid #bcbcbc"></div>
<svg class="abs" style="left:372px;top:620.8px" width="12" height="19" viewBox="0 0 12 19"><path d="M3,6.1 L6,3.1 L9,6.1 Z M3,13.1 L6,16.1 L9,13.1 Z" fill="#111"/></svg>
<div class="t" style="left:36.7px;top:624.8px;font-size:11.8px;line-height:11.8px;color:#141414;font-weight:400;">0mm</div>
<svg class="abs" style="left:4px;top:620px" width="22" height="16" viewBox="0 0 22 16"><path d="M3,4 H17 M3,1.5 V6.5 M17,1.5 V6.5 M8,1.5 V6.5 M12,1.5 V6.5" stroke="#d02020" stroke-width="1.1"/><rect x="1" y="9" width="19" height="2" fill="#3aa637"/><rect x="1" y="11" width="19" height="3" fill="#bbb"/></svg>
<div class="abs" style="left:6.5px;top:652.3px;width:14px;height:14px;background:#fff;border:1px solid #555"></div>
<div class="t" style="left:23.4px;top:653.4px;font-size:11.8px;line-height:11.8px;color:#141414;font-weight:400;">Více hloubek</div>
<div class="abs" style="left:6.5px;top:677.2px;width:14px;height:14px;background:#fff;border:1px solid #555"></div>
<div class="t" style="left:23.4px;top:678.3px;font-size:11.8px;line-height:11.8px;color:#141414;font-weight:400;">Použít tenkou stěnu</div>
<div class="abs" style="left:6.5px;top:702.8px;width:14px;height:14px;background:#fff;border:1px solid #555"></div>
<div class="t" style="left:23.4px;top:703.9px;font-size:11.8px;line-height:11.8px;color:#141414;font-weight:400;">Seřadit dle oblastí</div>
<div class="abs" style="left:6.5px;top:728px;width:14px;height:14px;background:#fff;border:1px solid #555"></div>
<svg class="abs" style="left:7.5px;top:729px" width="12" height="12" viewBox="0 0 12 12"><path d="M2,6 L5,9 L10.5,2.5" fill="none" stroke="#333" stroke-width="1.2"/></svg>
<div class="t" style="left:23.4px;top:729.1px;font-size:11.8px;line-height:11.8px;color:#141414;font-weight:400;">Ponechat pořadí</div>
<div class="abs" style="left:6.5px;top:752.7px;width:14px;height:14px;background:#fff;border:1px solid #555"></div>
<div class="t" style="left:23.4px;top:753.8px;font-size:11.8px;line-height:11.8px;color:#141414;font-weight:400;">Oba směry</div>
<div class="abs" style="left:3px;top:778px;width:398px;height:1px;background:#c3c3c3"></div>
<div class="abs" style="left:6.5px;top:786px;width:13px;height:13px;background:#fff;border:1px solid #555"></div>
<div class="t" style="left:22.6px;top:787.3px;font-size:11.4px;line-height:11.4px;color:#333;font-weight:700;">Přídavek</div>
<svg class="abs" style="left:387px;top:789px" width="12" height="8" viewBox="0 0 12 8"><path d="M1,1.5 L6,6.5 L11,1.5" fill="none" stroke="#666" stroke-width="1.2"/></svg>
<div class="abs" style="left:3px;top:810.3px;width:398px;height:1px;background:#c3c3c3"></div>
<div class="abs" style="left:6.5px;top:818.2px;width:13px;height:13px;background:#fff;border:1px solid #555"></div>
<div class="t" style="left:22.6px;top:819.5px;font-size:11.4px;line-height:11.4px;color:#333;font-weight:700;">Vyhlazení</div>
<svg class="abs" style="left:387px;top:821.2px" width="12" height="8" viewBox="0 0 12 8"><path d="M1,1.5 L6,6.5 L11,1.5" fill="none" stroke="#666" stroke-width="1.2"/></svg>
<div class="abs" style="left:3px;top:842.2px;width:398px;height:1px;background:#c3c3c3"></div>
<div class="abs" style="left:6.5px;top:850.8px;width:13px;height:13px;background:#fff;border:1px solid #555"></div>
<div class="t" style="left:22.6px;top:852.1px;font-size:11.4px;line-height:11.4px;color:#333;font-weight:700;">Optimalizace posuvu</div>
<svg class="abs" style="left:387px;top:853.8px" width="12" height="8" viewBox="0 0 12 8"><path d="M1,1.5 L6,6.5 L11,1.5" fill="none" stroke="#666" stroke-width="1.2"/></svg>
<svg id="vp" width="1263" height="894" viewBox="0 0 1263 894">
<defs><clipPath id="vc"><rect x="405" y="108" width="858" height="786"/></clipPath></defs>
<g clip-path="url(#vc)">
<rect x="405" y="108" width="858" height="786" fill="#51535f"/>
<path d="M553,107 L1263,107 L1263,252 L1250.5,249 C1246,246 1240,242 1231.7,239.6 L1180,230.2 L1080,210.7 L840,163.8 L620,119.7 Z" fill="#4e6150"/>
<path d="M553,107 L620,119.7 L840,163.8 L1080,210.7 L1180,230.2 L1231.7,239.6 C1240,242 1246,246 1250.5,249 L1263,252" fill="none" stroke="#1c1c22" stroke-width="1"/>
<path d="M530.7,107.5 L620,125 L840,168.8 L1080,216 L1240,247 Q1250,249 1254,252" fill="none" stroke="#1c1c22" stroke-width="1.1"/>
<polygon points="453.7,107.5 620.0,140.3 840.0,183.9 1080.0,231.3 1246.0,263.0 1251.7,284.0 1080.0,251.0 840.0,204.0 620.0,160.0 405.0,118.4 405.0,107.0" fill="#868a9e" stroke="#1c1c22" stroke-width="1.1" stroke-linejoin="round"/>
<polygon points="1255,252 1263,251.3 1263,271.7 1258.3,282.6 1253.6,285 1246.5,263.8 1251,261.5" fill="#8a8ea2" stroke="#1c1c22" stroke-width="1" stroke-linejoin="round"/>
<path d="M1246.5,263.8 Q1251,263 1253.6,251 M1251.5,262.5 L1257.8,283" fill="none" stroke="#1c1c22" stroke-width="0.9"/>
<polygon points="405.0,170.2 620.0,211.9 840.0,254.4 1080.0,302.0 1226.7,328.8 1230.0,352.0 1080.0,322.5 840.0,274.5 620.0,232.5 405.0,190.4" fill="#868a9e" stroke="#1c1c22" stroke-width="1.1" stroke-linejoin="round"/>
<polygon points="1232,311 1241,334 1234,351 1230,352 1224,329.7 Q1231,327 1232,311" fill="#8a8ea2" stroke="#1c1c22" stroke-width="1"/>
<path d="M1229,330 L1235,350" fill="none" stroke="#1c1c22" stroke-width="0.8"/>
<path d="M405,146.9 L620,188.6 L840,232.5 L1080,278.7 L1228,308 Q1233,309 1232,313" fill="none" stroke="#1c1c22" stroke-width="1.1"/>
<defs><linearGradient id="bl" x1="0" x2="1"><stop offset="0" stop-color="#12128a"/><stop offset="0.55" stop-color="#2a2ab0"/><stop offset="1" stop-color="#14148c"/></linearGradient><clipPath id="domec"><polygon points="900,200 1100,200 1100,280 1080,278.7 840,232.5 900,244"/></clipPath><linearGradient id="cyl" x1="0" x2="1"><stop offset="0" stop-color="#9093a7"/><stop offset="0.3" stop-color="#878a9f"/><stop offset="0.5" stop-color="#a3a6b8"/><stop offset="0.75" stop-color="#85889d"/><stop offset="1" stop-color="#797c91"/></linearGradient><linearGradient id="cyl2" x1="0" x2="1"><stop offset="0" stop-color="#85889c"/><stop offset="0.5" stop-color="#9a9db0"/><stop offset="1" stop-color="#7e8196"/></linearGradient></defs>
<g clip-path="url(#domec)"><ellipse cx="983.5" cy="264" rx="21" ry="28" fill="url(#bl)" stroke="#1c1c22" stroke-width="1"/></g>
<polygon points="405.0,390.8 529.3,362.3 590.0,353.3 651.0,358.4 843.5,397.0 862.0,405.0 877.7,427.5 858.7,412.3 846.0,407.3 653.5,370.0 594.0,365.5 532.0,373.7 405.0,403.2" fill="#868a9e" stroke="#1c1c22" stroke-width="1" stroke-linejoin="round"/>
<path d="M529.3,362.3 L532,373.7 M651,358.4 L653.5,370 M843.5,397 L846,407.3" stroke="#1c1c22" stroke-width="1"/>
<path d="M877.7,427.5 C880,440 879,450 871.4,466 C866,480 862,494 857.7,501.4 C850,512 844,517 836.8,520.5 C825,526 815,527.5 806,527.5 C798,527 792,526 785,524.5 L585.5,486.6 C580,486 575,486.5 571.3,487.1 L405,508" fill="none" stroke="#1c1c22" stroke-width="1"/>
<polygon points="405,559 705,618.5 900,656.7 1263,727.7 1263,800 405,800" fill="#62656f"/>
<path d="M405,559 L705,618.5 L900,656.7 L1263,727.7" fill="none" stroke="#1c1c22" stroke-width="1.1"/>
<polygon points="405.0,612.5 494.0,630.5 516.6,632.2 580.8,644.6 607.0,651.5 705.0,670.5 900.0,709.0 948.9,719.0 969.0,721.0 1003.5,714.2 1040.8,707.8 1061.0,710.4 1263.0,750.7 1263.0,782.0 1072.5,747.8 1055.0,745.8 1035.0,746.4 997.7,756.4 980.5,757.8 960.4,756.4 900.0,744.0 700.0,704.3 519.0,670.0 405.0,647.0" fill="#989caf" stroke="#1c1c22" stroke-width="1"/>
<polygon points="405.0,606.6 494.0,624.4 516.6,632.2 494.0,630.5 405.0,612.5" fill="#9b27a0" stroke="#1c1c22" stroke-width="0.8" stroke-linejoin="round"/>
<polygon points="580.8,644.6 607.0,645.8 705.0,664.8 900.0,702.7 948.9,713.3 969.0,715.3 1003.5,708.4 1040.8,701.2 1061.0,703.8 1263.0,740.6 1263.0,750.7 1061.0,710.4 1040.8,707.8 1003.5,714.2 969.0,721.0 948.9,719.0 900.0,709.0 705.0,670.5 607.0,651.5" fill="#9b27a0" stroke="#1c1c22" stroke-width="0.8" stroke-linejoin="round"/>
<path d="M494,624.4 L494,630.5 M607,645.8 L607,651.5 M948.9,713.3 L960.4,756.4 M1003.5,708.4 L1017,752 M1061,703.8 L1072.5,747.8" stroke="#1c1c22" stroke-width="1"/>
<defs><pattern id="hp" width="6" height="5" patternUnits="userSpaceOnUse"><rect width="6" height="5" fill="#617668"/><rect x="0" y="0" width="1" height="1.5" fill="#55695b"/><rect x="3" y="2.5" width="1" height="1.5" fill="#56695c"/></pattern></defs>
<polygon points="405.0,647.0 519.0,670.0 700.0,704.3 900.0,744.0 960.4,756.4 980.5,757.8 997.7,756.4 1035.0,746.4 1055.0,745.8 1072.5,747.8 1263.0,782.0 1263.0,782.0 1263.0,890.0 700.0,777.8 405.0,718.7" fill="url(#hp)"/>
<polygon points="405,718.7 700,777.8 1263,890 1263,894 405,894" fill="#4e6450"/>
<path d="M405,718.7 L700,777.8 L1263,890" fill="none" stroke="#1c1c22" stroke-width="1.1"/>
<polygon points="405,869.8 522.6,894 405,894" fill="#6a7a70"/>
<path d="M405,869.8 L522.6,894" fill="none" stroke="#1c1c22" stroke-width="1.1"/>
<defs><clipPath id="belowline"><polygon points="405,559 705,618.5 900,656.7 1263,727.7 1263,894 405,894"/></clipPath><clipPath id="lboss"><ellipse cx="566.5" cy="556" rx="67.7" ry="56.4"/></clipPath><linearGradient id="hole" x1="0" x2="1"><stop offset="0" stop-color="#8e91a4"/><stop offset="0.45" stop-color="#b3b6c6"/><stop offset="0.6" stop-color="#9598ab"/><stop offset="1" stop-color="#7d8095"/></linearGradient></defs>
<path d="M498.8,556 L500.5,578.5 A69,56.8 0 0 0 638.5,578.5 L634.2,556 Z" fill="url(#cyl2)"/>
<ellipse cx="569.5" cy="578.5" rx="69" ry="56.8" fill="url(#cyl2)" stroke="#1c1c22" stroke-width="0.9"/>
<ellipse cx="566.5" cy="556" rx="67.7" ry="56.4" fill="#51535f" stroke="#1c1c22" stroke-width="1"/>
<g clip-path="url(#lboss)"><polygon points="405,559 705,618.5 705,700 405,700" fill="#62656f"/><path d="M405,559 L705,618.5" stroke="#1c1c22" stroke-width="1.1"/></g>
<ellipse cx="567" cy="557" rx="64" ry="53.5" fill="none" stroke="#1c1c22" stroke-width="0.9"/>
<path d="M500,560 A69,56.8 0 0 0 639,570" fill="none" stroke="#1c1c22" stroke-width="0.8"/>
<ellipse cx="566" cy="556.7" rx="34" ry="29.7" fill="#636674" stroke="#1c1c22" stroke-width="1"/>
<ellipse cx="566.5" cy="560" rx="28.5" ry="26" fill="url(#hole)" stroke="#1c1c22" stroke-width="1"/>
<path d="M550,584 C556,570 575,563 592.6,566 C590,578 580,586 566,586 C560,586 554,585.5 550,584 Z" fill="#4e6450" stroke="#1c1c22" stroke-width="0.8"/>
<path d="M480,574 L660,609.6" fill="none" stroke="#1c1c22" stroke-width="1.1"/>
<path d="M911,404.5 L930.8,462.6 A67.3,59.8 0 0 0 1065.3,462.6 L1046.2,392 Z" fill="url(#cyl)"/>
<ellipse cx="998" cy="462.6" rx="67.3" ry="59.8" fill="url(#cyl)"/>
<ellipse cx="978.6" cy="404.5" rx="67.6" ry="59" fill="#51535f" stroke="#1c1c22" stroke-width="1"/>
<ellipse cx="979" cy="405.5" rx="63.5" ry="55.5" fill="none" stroke="#1c1c22" stroke-width="0.9"/>
<path d="M912,414 L931,466 M1046.2,392 L1065,452" stroke="#1c1c22" stroke-width="0.9"/>
<ellipse cx="976.8" cy="402.5" rx="34" ry="29.5" fill="#636674" stroke="#1c1c22" stroke-width="1"/>
<ellipse cx="977.7" cy="405" rx="28.6" ry="25" fill="url(#bl)" stroke="#1c1c22" stroke-width="0.9"/>
<polygon points="998,402.8 1018,406 1036,414 1050,426 1061,440 1065.3,460 1063,478 1055,495 1042,508 1024,518 1005,522.4 985,522 966,517 950,506 938,491 931,472 930.8,454 936,436 946,421 960,411 978,404.5" fill="none" stroke="#1c30f0" stroke-width="4.2" stroke-linejoin="round"/>
<polygon points="998,402.8 1018,406 1036,414 1050,426 1061,440 1065.3,460 1063,478 1055,495 1042,508 1024,518 1005,522.4 985,522 966,517 950,506 938,491 931,472 930.8,454 936,436 946,421 960,411 978,404.5" fill="none" stroke="#74c4ff" stroke-width="2" stroke-dasharray="2.8 1.8"/>
<path d="M909.5,464 L917.5,441" stroke="#15163c" stroke-width="6.5" stroke-linecap="round"/><polygon points="922.5,428 929,447 910.5,441" fill="#15163c" stroke="#15163c" stroke-width="1" stroke-linejoin="round"/>
<g transform="translate(426,139)"><path d="M1,7 L8,3 L15,5 L15,12 L9,16 L1,12 Z" fill="#f2c400" stroke="#7a6000" stroke-width="0.8"/><rect x="8" y="2" width="7" height="7" fill="#78c4ea" stroke="#2a6d9a" stroke-width="0.8"/></g>
<text x="446.5" y="154.8" font-family="Liberation Sans" font-size="13.4" fill="#111" transform="translate(446.5,0) scale(0.885,1) translate(-446.5,0)">PŘÍPRAVEK PRO M60 ...</text>
<path d="M409,147 L413,150 L409,153" fill="none" stroke="#222" stroke-width="1"/>
<path d="M1155,108 C1190,113 1215,117 1229,120.5 L1263,127.5" fill="none" stroke="#f2f25a" stroke-width="2.6"/><circle cx="1229" cy="120.3" r="3" fill="#f2f25a"/>
<g transform="translate(920,113)"><circle cx="10" cy="7" r="5.5" fill="#c8ccd0" stroke="#444" stroke-width="1"/><path d="M6,11 L1.5,15.5" stroke="#3a90c8" stroke-width="2.5" stroke-linecap="round"/></g>
<g transform="translate(942,112)"><rect x="4" y="0" width="14" height="13" fill="none" stroke="#666" stroke-dasharray="2 1"/><circle cx="10" cy="7" r="6" fill="#b8c8d0" stroke="#444" stroke-width="1"/><path d="M5.5,11.5 L1,16" stroke="#3a90c8" stroke-width="2.5" stroke-linecap="round"/></g>
<g transform="translate(967,112)"><path d="M8,9 L14,3 L17,6 L11,12 Z" fill="#c8ccd0" stroke="#555" stroke-width="0.8"/><path d="M2,10 L8,14 L6,16 L1,13 Z" fill="#d8d8d8"/><path d="M7,14 H16 M7,14 L10,11 M7,14 L10,17" stroke="#3a90c8" stroke-width="2"/></g>
<g transform="translate(991,113)" opacity="0.45"><path d="M1,4 C5,1 11,1 15,4 V16 H1 Z" fill="#6f8878"/></g>
<g transform="translate(1012,112)"><rect x="0" y="0" width="19" height="18" fill="none" stroke="#7a8a7a"/><path d="M1,5 L5,1 H18 V14 L14,18 H1 Z" fill="#f0f0f0" stroke="#333" stroke-width="0.8"/><rect x="1" y="5" width="13" height="13" fill="#3d8fb8" stroke="#222" stroke-width="0.8"/></g>
<g transform="translate(1050,112)"><path d="M1,4 L8,1 L15,3 V16 L8,18 L1,15 Z" fill="#e8e8e8" stroke="#444" stroke-width="0.8"/><path d="M1,4 L8,6 V18 L1,15 Z" fill="#3d8fb8"/><path d="M8,6 L15,3" stroke="#444" stroke-width="0.8"/></g>
<g transform="translate(1086,114)"><ellipse cx="8" cy="6" rx="8" ry="5.5" fill="#c0c4c8"/><circle cx="8" cy="6" r="3.8" fill="#333"/></g>
<g transform="translate(1124,111)" opacity="0.35"><path d="M2,15 L14,3 L17,6 L5,18 Z" fill="#7f9383"/><circle cx="6" cy="5" r="4" fill="#7f9383"/></g>
<g transform="translate(1145,111)" opacity="0.35"><circle cx="9" cy="6" r="5" fill="#7f9383"/><path d="M1,17 L6,11 L12,11 L17,17 Z" fill="#7f9383"/></g>
<g transform="translate(1180,114)"><rect x="0" y="0" width="13" height="10" fill="#c8c8c8" stroke="#444" stroke-width="0.8"/><path d="M6.5,10 V13 M3,14 H10" stroke="#333" stroke-width="1.3"/></g>
<path d="M1036,121 H1042 L1039,124 Z" fill="#7d8f80"/>
<path d="M1072,121 H1078 L1075,124 Z" fill="#7d8f80"/>
<path d="M1107,121 H1113 L1110,124 Z" fill="#7d8f80"/>
<path d="M1167,121 H1173 L1170,124 Z" fill="#7d8f80"/>
<path d="M1205,121 H1211 L1208,124 Z" fill="#7d8f80"/>
<path d="M447.5,838 L428,833.5" stroke="#e42a2a" stroke-width="4.2"/><polygon points="419.5,832 430.5,827.5 429,839.5" fill="#c81e1e"/>
<text x="412.5" y="835" font-family="Liberation Sans" font-size="11" fill="#e02a2a">X</text>
<path d="M450,840 L444.5,857" stroke="#2a9a32" stroke-width="4"/><polygon points="438.5,855 449.5,859 441,868" fill="#2aa03a"/>
<text x="435.5" y="877" font-family="Liberation Sans" font-size="10.5" fill="#2aa03a">Y</text>
<path d="M447,828 L450,838.5" stroke="#1f2aa8" stroke-width="5"/><circle cx="447" cy="826.8" r="4.6" fill="#2830cc"/>
<text x="440.5" y="823" font-family="Liberation Sans" font-size="11" fill="#2030e0">Z</text>
</g>
</svg>
<div class="abs" style="left:405px;top:482px;width:10px;height:43px;background:#f8f8f8;border:1px solid #d8d8d8;border-left:none"></div><svg class="abs" style="left:406px;top:499px" width="8" height="8"><circle cx="4" cy="4" r="2.6" fill="#e6e6e6" stroke="#9a9a9a"/></svg>
<svg class="abs" style="left:0;top:0;pointer-events:none" width="1263" height="894" viewBox="0 0 1263 894">
<g fill="none" stroke="#e31b1b" stroke-linecap="round" stroke-linejoin="round">
<path d="M566,362 C540,353 520,347 498,342.5 C470,336.5 445,330 421.8,330.5 C395,331 365,341 340,344.5 C325,346 310,345 295,341.5 C270,336 240,328 215,323.5 C195,320 178,317 163,316" stroke-width="18"/>
<path d="M163,316 C185,305 200,295 213,290 C235,281 252,278 263.8,273.7" stroke-width="16"/>
<path d="M163,316 C175,327 185,335 194.6,344.7 C205,355 215,368 225.6,379.3" stroke-width="16"/>
<path d="M14,437 C22,428 30,423 39,423 C50,424 58,430 65.7,437 C73,445 79,452 81.4,460.4 C84,468 83,475 79.8,482 C76,490 71,494 65.7,498 C58,504 50,508 42.3,509 C34,509 27,506 20.3,502.7 C12,497 7,492 4.7,487 C0,480 -3,476 -5,472" stroke-width="19"/>
<path d="M-6,444 C2,441 8,439 14,437" stroke-width="19"/>
<path d="M-8,434 C0,431 10,427 22,424" stroke-width="19"/>
</g>
</svg>

</body></html>
